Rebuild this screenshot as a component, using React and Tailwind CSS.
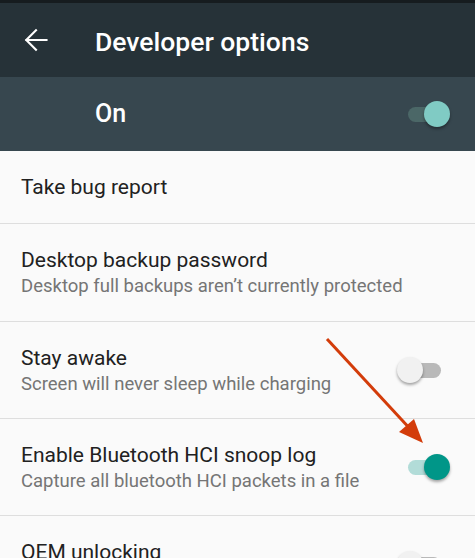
import React from "react";

const Switch = ({ on, thumb, track }) => (
  <div className="relative h-[26px] w-[54px] shrink-0">
    <div
      className={`absolute left-[11px] top-[5.5px] h-[15px] w-[33px] rounded-full ${track}`}
    />
    <div
      className={`absolute top-0 h-[26px] w-[26px] rounded-full shadow-[0_2px_3px_rgba(0,0,0,0.35)] ${thumb} ${
        on ? "left-[27px]" : "left-0"
      }`}
    />
  </div>
);

const Row = ({ title, summary, toggle, height }) => (
  <div
    className={`flex items-center justify-between border-b border-[#dedede] pl-[21px] pr-[24px] ${height}`}
  >
    <div className="flex flex-col">
      <span className="text-[21px] leading-[28px] text-[#212121]">{title}</span>
      {summary && (
        <span className="text-[18.5px] leading-[25px] text-[#757575]">{summary}</span>
      )}
    </div>
    {toggle}
  </div>
);

export default function App() {
  return (
    <div className="relative h-[558px] w-[475px] overflow-hidden bg-[#fafafa] font-['Roboto',sans-serif]">
      <div className="h-[3px] bg-[#161c1f]" />

      <div className="flex h-[74px] items-center bg-[#263238]">
        <div className="w-[95px] pl-[18px]">
          <svg width="36" height="36" viewBox="0 0 24 24" fill="none" stroke="#ffffff" strokeWidth="1.4" strokeLinecap="square">
            <path d="M19 12H5.5M12 5.5 5.5 12l6.5 6.5" />
          </svg>
        </div>
        <h1 className="pt-[3px] text-[26.5px] font-medium text-white">Developer options</h1>
      </div>

      <div className="flex h-[74px] items-center justify-between bg-[#37474f] pl-[95px] pr-[24px]">
        <span className="text-[25px] font-medium text-white">On</span>
        <Switch on track="bg-[#4b6767]" thumb="bg-[#80cbc4]" />
      </div>

      <Row height="h-[73px]" title="Take bug report" />
      <Row
        height="h-[98px]"
        title="Desktop backup password"
        summary="Desktop full backups aren’t currently protected"
      />
      <Row
        height="h-[97px]"
        title="Stay awake"
        summary="Screen will never sleep while charging"
        toggle={<Switch track="bg-[#b9b9b9]" thumb="bg-[#f1f1f1]" />}
      />
      <Row
        height="h-[97px]"
        title="Enable Bluetooth HCI snoop log"
        summary="Capture all bluetooth HCI packets in a file"
        toggle={<Switch on track="bg-[#b2dcd8]" thumb="bg-[#009688]" />}
      />
      <Row
        height="h-[97px]"
        title="OEM unlocking"
        summary="Allow the bootloader to be unlocked"
        toggle={<Switch track="bg-[#b9b9b9]" thumb="bg-[#f1f1f1]" />}
      />

      <svg className="pointer-events-none absolute inset-0" width="475" height="558">
        <line x1="327" y1="339" x2="413" y2="432" stroke="#d33c0a" strokeWidth="3" />
        <polygon points="399,432 414,419 423,443" fill="#d33c0a" />
      </svg>
    </div>
  );
}
